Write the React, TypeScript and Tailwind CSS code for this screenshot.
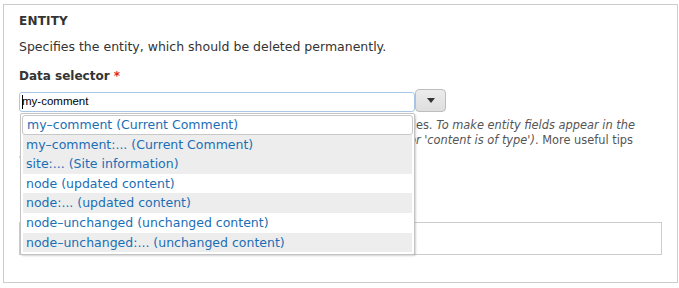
const items = [
  { label: 'my–comment (Current Comment)', bg: 'bg-white', active: true },
  { label: 'my–comment:... (Current Comment)', bg: 'bg-[#ededed]' },
  { label: 'site:... (Site information)', bg: 'bg-[#ededed]' },
  { label: 'node (updated content)', bg: 'bg-white' },
  { label: 'node:... (updated content)', bg: 'bg-[#ededed]' },
  { label: 'node–unchanged (unchanged content)', bg: 'bg-white' },
  { label: 'node–unchanged:... (unchanged content)', bg: 'bg-[#ededed]' },
]

function Autocomplete() {
  return (
    <ul className="absolute left-[16px] top-[108px] w-[395px] h-[142px] bg-white border border-[#c4c4c4] rounded-[2px] shadow-[1px_1px_2px_rgba(0,0,0,0.18)] px-px pt-px text-[12.5px]">
      {items.map((item) =>
        item.active ? (
          <li
            key={item.label}
            className="h-[19.6px] leading-[18px] pl-[4px] border border-[#c8c8c8] rounded-[3px] bg-white text-[#1a6eb5] whitespace-nowrap"
          >
            {item.label}
          </li>
        ) : (
          <li
            key={item.label}
            className={`h-[19.6px] leading-[19.6px] mx-px pl-[3px] ${item.bg} text-[#1a6eb5] whitespace-nowrap`}
          >
            {item.label}
          </li>
        )
      )}
    </ul>
  )
}

export default function App() {
  return (
    <div className="w-[679px] h-[288px] bg-white pt-[4px] pl-[3px] font-['DejaVu_Sans',sans-serif] text-[#333]">
      <fieldset className="relative w-[673px] h-[279px] border border-[#ccc] px-[15px] flex flex-col">
        {/* Heading */}
        <div className="mt-[9px] h-[15px] leading-[15px] text-[12px] font-bold tracking-[0.2px]">ENTITY</div>
        <div className="mt-[10px] h-[16px] leading-[16px] text-[12.5px]">
          Specifies the entity, which should be deleted permanently.
        </div>

        <label className="mt-[14px] h-[15px] leading-[15px] text-[12px] font-bold">
          Data selector <span className="text-[#e0261c]">*</span>
        </label>

        {/* Input + button */}
        <div className="mt-[5px] flex items-end">
          <div className="w-[396px] h-[20px] border border-[#a9c6e6] rounded-[3px] bg-white flex items-center pl-[2px] font-['Liberation_Sans',sans-serif] text-[11.5px] text-black">
            <span className="inline-block w-px h-[14px] bg-black -mr-px" />
            <span>my-comment</span>
          </div>
          <button className="w-[31px] h-[23px] border border-[#bdbdbd] rounded-[4px] bg-gradient-to-b from-[#ececec] to-[#dedede] flex items-center justify-center">
            <svg width="8" height="5" viewBox="0 0 8 5">
              <path d="M0 0 H8 L4 5 Z" fill="#333" />
            </svg>
          </button>
        </div>

        {/* Description */}
        <div className="mt-[6px] text-[11.4px] leading-[15px] text-[#555]">
          <div className="w-[616px] flex justify-end overflow-hidden whitespace-nowrap">
            <span>
              The data selector helps you drill down into the data available to Rules.{' '}
              <em>To make entity fields appear in the</em>
            </span>
          </div>
          <div className="w-[614px] flex justify-end overflow-hidden whitespace-nowrap">
            <span>
              <em>data selector, you may have to use the condition 'entity has field' (or 'content is of type')</em>. More useful tips
            </span>
          </div>
          <div className="whitespace-nowrap">about data selection can be found on the handbook page.</div>
        </div>

        <div className="mt-[59px] w-[643px] h-[33px] border border-[#ccc] bg-white" />

        <Autocomplete />
      </fieldset>
    </div>
  )
}
